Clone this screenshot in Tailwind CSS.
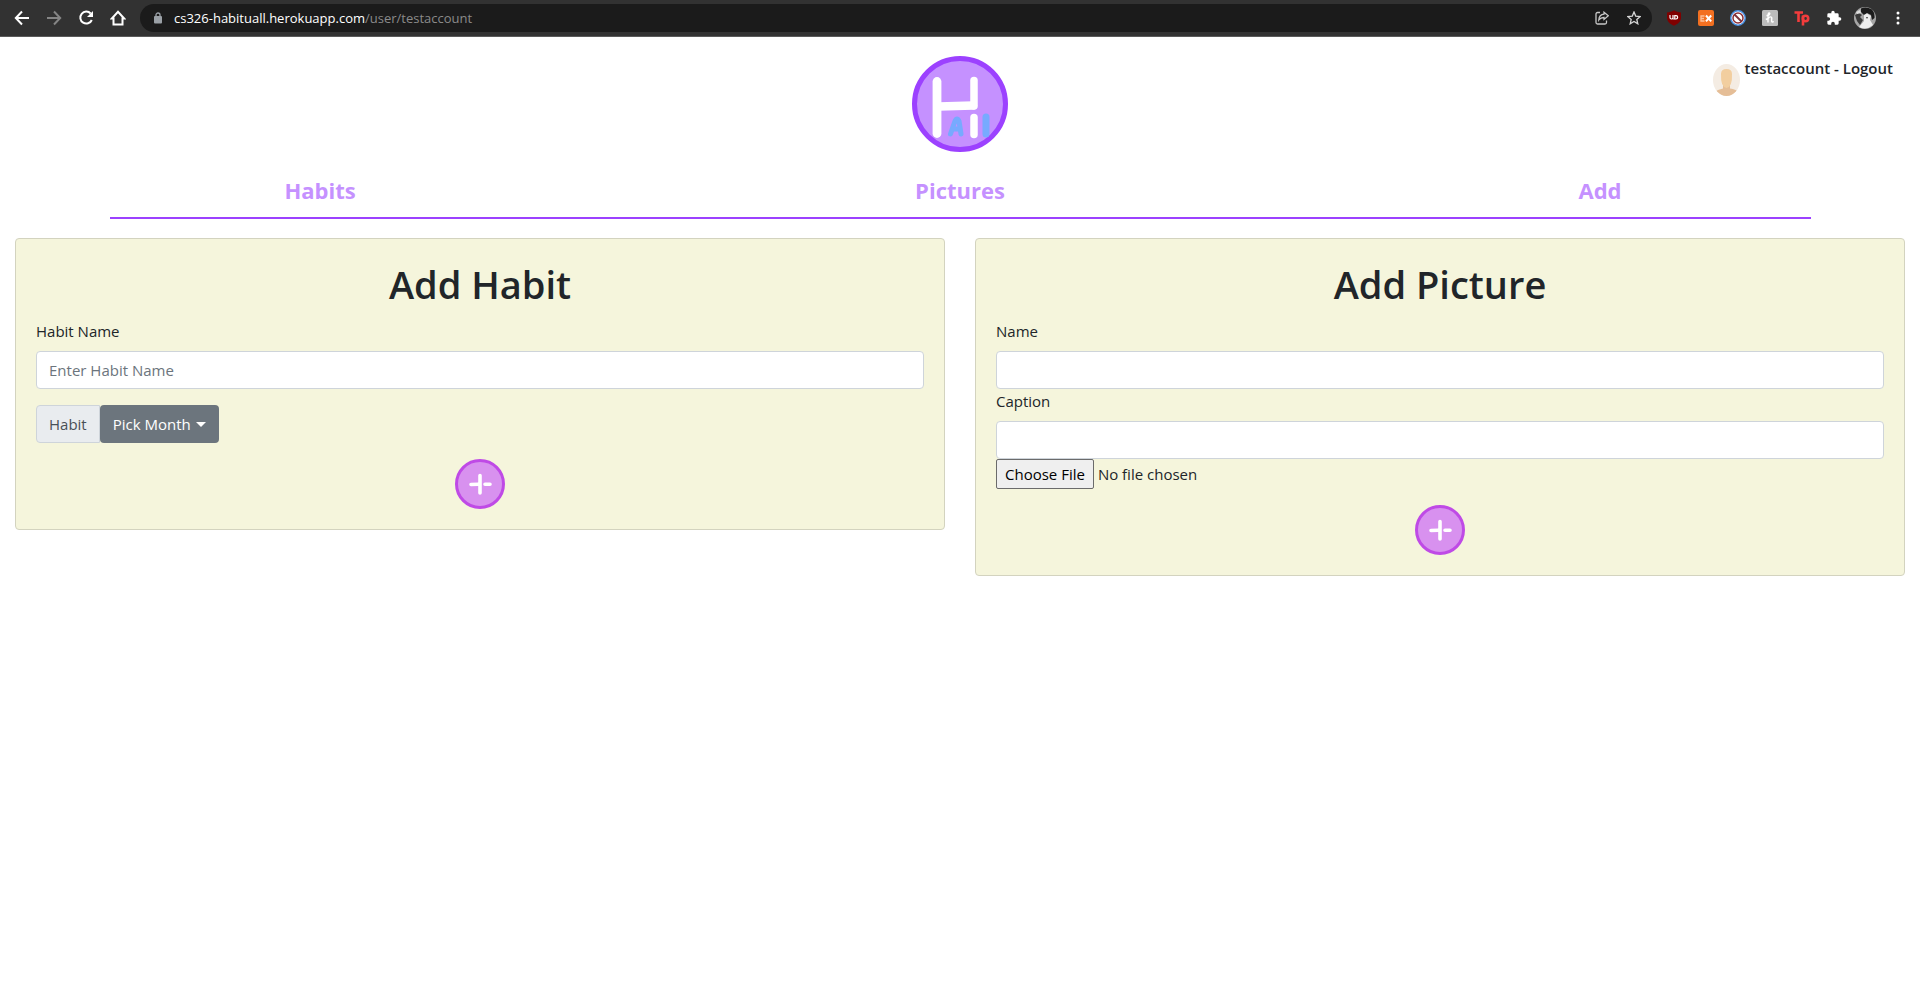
<!DOCTYPE html>
<html lang="en">
<head>
<meta charset="utf-8">
<title>Habituall</title>
<script src="https://cdn.jsdelivr.net/npm/@tailwindcss/browser@4"></script>
</head>
<body class="min-h-screen bg-white font-['Open_Sans','Noto_Sans',sans-serif] text-[15px] leading-6 text-[#212529]">

<!-- Browser toolbar -->
<header class="flex h-[37px] items-center border-b border-[#5a5a5a] bg-[#323232] pr-3 pl-[14px] text-white">
  <nav class="flex items-center gap-4" aria-label="Browser">
    <button aria-label="Back"><svg class="size-4" viewBox="0 0 16 16" fill="none" stroke="#fff" stroke-width="2"><path d="M15 8H2M8 1.500L1.800 8L8 14.500"/></svg></button>
    <button aria-label="Forward"><svg class="size-4" viewBox="0 0 16 16" fill="none" stroke="#858585" stroke-width="2"><path d="M1 8H14M8 1.500L14.200 8L8 14.500"/></svg></button>
    <button aria-label="Reload"><svg class="size-4" viewBox="0 0 16 16"><path d="M12.700 3.500A6 6 0 1 0 13.800 10" fill="none" stroke="#fff" stroke-width="2"/><path d="M15 1V7H9Z" fill="#fff"/></svg></button>
    <button aria-label="Home"><svg class="size-4" viewBox="0 0 16 16" fill="none" stroke="#fff" stroke-width="2"><path d="M3.500 14.500V8.500H1.800L8 1.800L14.200 8.500H12.500V14.500Z"/></svg></button>
  </nav>
  <div class="ml-[14px] flex h-7 flex-1 items-center rounded-full bg-[#1b1b1b] pr-[11px] pl-[14px]">
    <svg class="h-3 w-2" viewBox="0 0 8 12"><path d="M2 5V3a2 2 0 0 1 4 0V5" fill="none" stroke="#9aa0a6" stroke-width="1.300"/><rect y="4" width="8" height="7.500" rx="1" fill="#9aa0a6"/></svg>
    <p class="ml-3 flex-1 text-[13px] leading-5 text-[#8a8a8a]"><span class="text-white">cs326-habituall.herokuapp.com</span>/user/testaccount</p>
    <div class="flex items-center gap-[18px]">
      <button aria-label="Share"><svg class="size-[14px]" viewBox="0 0 14 14" fill="none" stroke="#c8c8c8" stroke-width="1.300"><path d="M5 1.500H2.500a1.500 1.500 0 0 0-1.500 1.500V11.500A1.500 1.500 0 0 0 2.500 13H10a1.500 1.500 0 0 0 1.500-1.500V9.500"/><path d="M9 1.200L13.300 4.800L9 8.400V6.500C6.500 6.500 5 7.300 3.800 9C4 6 5.500 3.500 9 3.200Z"/></svg></button>
      <button aria-label="Bookmark"><svg class="size-[14px]" viewBox="0 0 14 14" fill="none" stroke="#d5d5d5" stroke-width="1.300"><path d="M7 1L8.700 5.100L13.200 5.500L9.800 8.400L10.800 12.800L7 10.500L3.200 12.800L4.200 8.400L.8 5.500L5.300 5.100Z"/></svg></button>
    </div>
  </div>
  <div class="ml-[14px] flex items-center gap-4">
    <button aria-label="uBlock Origin"><svg class="size-4" viewBox="0 0 16 16"><path d="M8 .3C10 1.800 12.500 2.300 15 2.400V7.500C15 11.500 12 14 8 15.700C4 14 1 11.500 1 7.500V2.400C3.500 2.300 6 1.800 8 .3Z" fill="#800000"/><path d="M4 5V7.500a1.500 1.500 0 0 0 3 0V5M7.200 9H10a1.600 1.600 0 0 0 0-3.300H8.800V9" fill="none" stroke="#fff" stroke-width="1.200"/></svg></button>
    <button aria-label="EX"><svg class="size-4" viewBox="0 0 16 16"><rect width="16" height="16" rx="2" fill="#f37021"/><path d="M6.500 6H3V11H6.500M3 8.500H6" fill="none" stroke="#fbc09a" stroke-width="1.300"/><path d="M8 5.500L13.200 11.300M13.200 5.500L8 11.300" stroke="#fff" stroke-width="2"/></svg></button>
    <button aria-label="Blocker"><svg class="size-4" viewBox="0 0 16 16"><circle cx="8" cy="8" r="7.200" fill="#fff" stroke="#4a90e2" stroke-width="1.500"/><circle cx="8" cy="8" r="5" fill="none" stroke="#8c2f36" stroke-width="1.500"/><path d="M4.500 4.500L11.500 11.500" stroke="#7d3038" stroke-width="1.800"/></svg></button>
    <button aria-label="Honey"><svg class="size-4" viewBox="0 0 16 16"><rect width="16" height="16" rx="1.500" fill="#bcbcbc"/><path d="M4.500 5.500C7 6 9 3 7 3C5.800 3 6 6 6 12.500M6 9C7 6.500 10 6 9.800 8.500C9.500 11 9.300 12.800 11.800 11.500M3.800 9.500L6 8.500" fill="none" stroke="#fff" stroke-width="1.400"/></svg></button>
    <button aria-label="Tp"><svg class="size-4" viewBox="0 0 16 16" fill="none" stroke="#f23c3c" stroke-width="2.600"><path d="M.5 2.500H9M4.500 2.500V12M9 5.500V15.500"/><circle cx="11.500" cy="8.500" r="2.700"/></svg></button>
    <button aria-label="Extensions"><svg class="size-4" viewBox="0 0 24 24" fill="#fff"><path d="M20.500 11H19V7a2 2 0 0 0-2-2h-4V3.500a2.500 2.500 0 0 0-5 0V5H4a2 2 0 0 0-2 2v3.800h1.500a2.700 2.700 0 0 1 0 5.400H2V20a2 2 0 0 0 2 2h3.800v-1.500a2.700 2.700 0 0 1 5.400 0V22H17a2 2 0 0 0 2-2v-4h1.500a2.500 2.500 0 0 0 0-5z"/></svg></button>
  </div>
  <button class="ml-3" aria-label="Profile"><svg class="size-[22px]" viewBox="0 0 22 22"><circle cx="11" cy="11" r="11" fill="#a5a5a5"/><path d="M7 1.500Q12-1 18 2.500Q21 6 20.500 11L18 13L17 8L13 6L10 8L7 5Z" fill="#1c1c1c"/><path d="M10 8L13 6.500L17 9L16 13L19 18Q12 24 5 20L10 14Z" fill="#eee"/><path d="M1 8L5 6L8 8L6 10L9 13L6 18L3 14ZM12 10L14 10L13 12Z" fill="#3a3a3a"/><path d="M2 5L6 3L7 6L3 7Z" fill="#ddd"/></svg></button>
  <button class="ml-5 mr-2" aria-label="Menu"><svg class="h-4 w-1" viewBox="0 0 4 16" fill="#fff"><circle cx="2" cy="3" r="1.500"/><circle cx="2" cy="8" r="1.500"/><circle cx="2" cy="13" r="1.500"/></svg></button>
</header>

<!-- Logo and account -->
<div class="relative flex justify-center pt-[19px]">
  <a href="#" aria-label="Habituall home"><svg class="size-24" viewBox="0 0 96 96"><circle cx="48" cy="48" r="45.500" fill="#c591ff" stroke="#9c41ff" stroke-width="5"/><g fill="none" stroke="#fff" stroke-linecap="round"><path d="M25 25.500V77.500" stroke-width="8.800"/><path d="M62 24.500V50" stroke-width="7.500"/><path d="M27 50.500L61 49.500" stroke-width="8.500"/><path d="M62 61.500V78.500" stroke-width="7.500"/></g><g fill="none" stroke="#77aaff" stroke-linecap="round" stroke-linejoin="round"><path d="M38.500 78L43 65Q45 61 47 65L49 78M41 73H48" stroke-width="5"/><path d="M74 61V78" stroke-width="7"/></g></svg></a>
  <div class="absolute top-[19px] right-[27px] flex gap-[5px] font-semibold">
    <svg class="mt-2 h-8 w-[27px]" viewBox="0 0 27 32"><defs><clipPath id="face"><ellipse cx="13.500" cy="16" rx="13.500" ry="16"/></clipPath></defs><g clip-path="url(#face)"><path d="M0 0H27V32H0Z" fill="#f4ece3"/><path d="M0 32V29Q5 25 10 24.500V20H17V24.500Q23 25 27 29V32Z" fill="#e5be97"/><path d="M8 10Q8 5 13.500 5T19 10Q19.500 23 13.500 24Q7.500 23 8 10Z" fill="#f2ce9f"/></g></svg>
    <a href="#">testaccount - Logout</a>
  </div>
</div>

<nav class="mt-5 grid grid-cols-3 text-center text-[22px] leading-9 font-bold text-[#c591ff]" aria-label="Main">
  <a href="#">Habits</a>
  <a href="#">Pictures</a>
  <a href="#">Add</a>
</nav>
<div class="px-[15px]"><hr class="mx-auto mt-[9px] w-[90%] border-t-2 border-[#9c41ff]"></div>

<main class="mt-[19px] grid grid-cols-2 items-start gap-[30px] px-[15px]">
  <form class="rounded border border-[#d3d3bf] bg-[#f5f5dc] p-5">
    <h1 class="mb-[10px] text-center text-[38px] leading-[50px] font-semibold">Add Habit</h1>
    <label for="habit" class="mb-2 block">Habit Name</label>
    <input id="habit" type="text" placeholder="Enter Habit Name" class="block h-[38px] w-full rounded border border-[#ced4da] bg-white px-3 placeholder:text-[#6c757d]">
    <div class="mt-4 flex h-[38px]">
      <span class="rounded-l border border-[#ced4da] bg-[#e9ecef] px-3 py-[6px] text-[#495057]">Habit</span>
      <button type="button" class="flex items-center gap-[5px] rounded bg-[#6c757d] px-[13px] text-white">Pick Month
        <svg class="h-[5px] w-[10px]" viewBox="0 0 10 5" fill="#fff"><path d="M0 0H10L5 5Z"/></svg></button>
    </div>
    <button type="button" aria-label="Add habit" class="mx-auto mt-4 block size-[50px]"><svg viewBox="0 0 50 50"><circle cx="25" cy="25" r="23.500" fill="#d891ef" stroke="#bf4ae6" stroke-width="3"/><path d="M25 16.500V34M16 25.500L23 25.200M30 25.200H35" fill="none" stroke="#fff" stroke-width="3.600" stroke-linecap="round"/></svg></button>
  </form>

  <form class="rounded border border-[#d3d3bf] bg-[#f5f5dc] p-5">
    <h1 class="mb-[10px] text-center text-[38px] leading-[50px] font-semibold">Add Picture</h1>
    <label for="name" class="mb-2 block">Name</label>
    <input id="name" type="text" class="block h-[38px] w-full rounded border border-[#ced4da] bg-white px-3">
    <label for="caption" class="mb-2 block">Caption</label>
    <input id="caption" type="text" class="block h-[38px] w-full rounded border border-[#ced4da] bg-white px-3">
    <input type="file" aria-label="Picture file" class="block h-[30px] file:mr-1 file:h-[30px] file:rounded-xs file:border file:border-solid file:border-[#6b6b6b] file:bg-[#efefef] file:px-2 file:text-black">
    <button type="button" aria-label="Add picture" class="mx-auto mt-4 block size-[50px]"><svg viewBox="0 0 50 50"><circle cx="25" cy="25" r="23.500" fill="#d891ef" stroke="#bf4ae6" stroke-width="3"/><path d="M25 16.500V34M16 25.500L23 25.200M30 25.200H35" fill="none" stroke="#fff" stroke-width="3.600" stroke-linecap="round"/></svg></button>
  </form>
</main>
</body>
</html>
